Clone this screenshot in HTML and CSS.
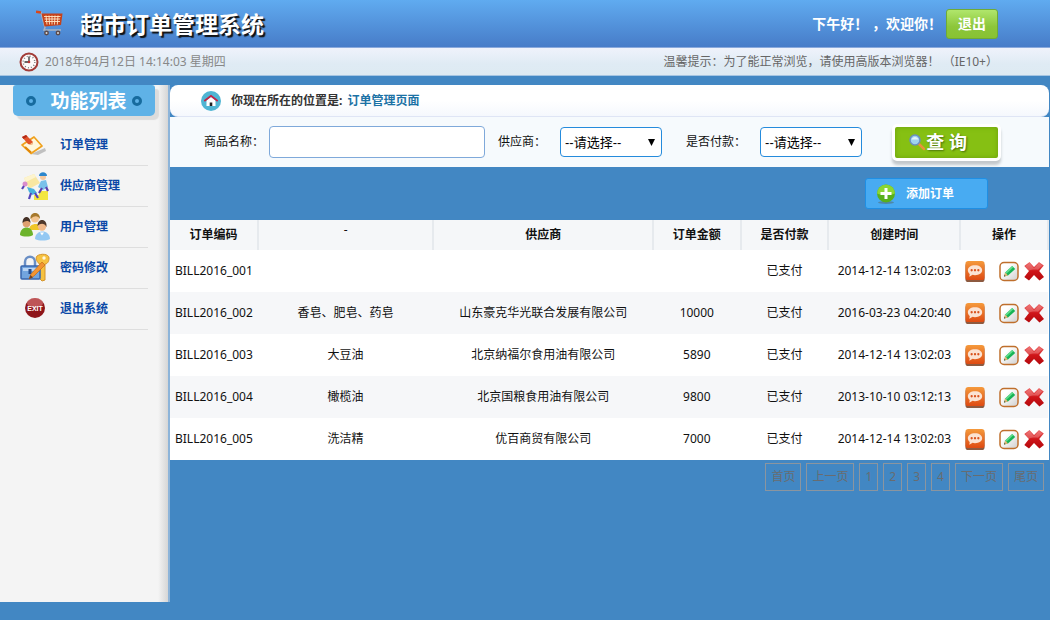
FILE: index.html
```
<!DOCTYPE html>
<html lang="zh-CN">
<head>
    <meta charset="UTF-8">
    <title>超市订单管理系统</title>
    <link rel="stylesheet" href="styles.css">
</head>
<body>
    <!-- shared icons -->
    <svg class="sprite" width="0" height="0" aria-hidden="true">
        <defs>
            <linearGradient id="gOrange" x1="0" y1="0" x2="0" y2="1"><stop offset="0" stop-color="#f59a3c"/><stop offset="1" stop-color="#de4a12"/></linearGradient>
            <linearGradient id="gRed" x1="0" y1="0" x2="0" y2="1"><stop offset="0" stop-color="#ee6a6a"/><stop offset=".5" stop-color="#cf1519"/><stop offset="1" stop-color="#b3090d"/></linearGradient>
            <linearGradient id="gPaper" x1="0" y1="0" x2="1" y2="1"><stop offset=".3" stop-color="#ffffff"/><stop offset="1" stop-color="#cfcfcf"/></linearGradient>
        </defs>
        <symbol id="view" viewBox="0 0 20 22">
            <rect x="0" y="2" width="20" height="20" rx="3" fill="#8d5a40"/>
            <rect x="0" y="0" width="20" height="20" rx="3" fill="url(#gOrange)"/>
            <path d="M10 4.500c-4.500 0-7.500 2.200-7.500 5.200 0 1.600.8 2.900 2 3.800L4 16.500l3.500-2c.8.2 1.600.3 2.500.3 4.500 0 7.500-2.100 7.500-5.100S14.500 4.500 10 4.500z" fill="#fbe3d3"/>
            <circle cx="6.500" cy="9.700" r="1.200" fill="#d9531e"/><circle cx="10" cy="9.700" r="1.200" fill="#d9531e"/><circle cx="13.500" cy="9.700" r="1.200" fill="#d9531e"/>
        </symbol>
        <symbol id="edit" viewBox="0 0 20 20">
            <rect x="1" y="1" width="18" height="18" rx="4" fill="url(#gPaper)" stroke="#bf6f2c" stroke-width="1.500"/>
            <path d="M5 15l1.200-4 7-6.500 3 3-7.200 6.500z" fill="#17b455"/>
            <path d="M6.200 11l7-6.500 1.200 1.200-7 6.600z" fill="#5fdc8c"/>
            <path d="M5 15l1.200-4 2.800 3z" fill="#e9b878"/><path d="M5 15l.5-1.600 1.100 1.100z" fill="#333"/>
        </symbol>
        <symbol id="remove" viewBox="0 0 20 20">
            <path d="M5.500 0.500L10 5.500 15 .5l4.800 3.500-4.600 5.500 4.800 6-4.500 3.500L10 13.500 5 19 .3 15.500l4.700-6L.3 4.500z" fill="url(#gRed)"/>
            <path d="M5.500 1.500L10 6.800l5-5 3.200 2.300L14 8.200c-3-.4-7-.2-9.500 1L1.500 4.700z" fill="#f28d8d" opacity=".45"/>
        </symbol>
    </svg>

    <header class="header">
        <div class="brand">
            <svg class="cart" viewBox="0 0 28 27" aria-hidden="true">
                <path d="M1 2l4 .5L9 17.500l-1 2.500h17" fill="none" stroke="#a9b4c4" stroke-width="1.500"/>
                <path d="M0 1.800L5 2.500" stroke="#d8471c" stroke-width="2.500"/>
                <path d="M5.500 3.500h21l-1.500 11.500L8.500 16.500z" fill="#c5431b"/>
                <path d="M8 6.500h16.500M8.500 9h15.500M9 11.500h15M10 5.500l1 9M13 5.500l.5 9M16 5.500v9M19 5.500l-.5 9M22 5.500l-.7 9" stroke="#ffe7c5" stroke-width=".9"/>
                <circle cx="10.500" cy="23" r="2.400" fill="#5b4a4a"/><circle cx="22" cy="23" r="2.400" fill="#5b4a4a"/>
                <circle cx="10.500" cy="23" r="1" fill="#ddd"/><circle cx="22" cy="23" r="1" fill="#ddd"/>
            </svg>
            <h1>超市订单管理系统</h1>
        </div>
        <div class="user">
            <span>下午好！ ，欢迎你！</span>
            <a href="#" class="logout">退出</a>
        </div>
    </header>

    <section class="timebar">
        <svg class="clock" viewBox="0 0 20 20" aria-hidden="true">
            <circle cx="10" cy="10" r="8.500" fill="#fdfafa" stroke="#a23c38" stroke-width="2"/>
            <circle cx="10" cy="10" r="5.800" fill="none" stroke="#777" stroke-width="1.500" stroke-dasharray=".9 2.137"/>
            <path d="M10 4.500V10H5.500" fill="none" stroke="#333" stroke-width="1.300"/>
            <circle cx="10" cy="10" r="1.300" fill="#b33"/>
        </svg>
        <span class="time">2018年04月12日 14:14:03 星期四</span>
        <span class="tip">温馨提示：为了能正常浏览，请使用高版本浏览器！ （IE10+）</span>
    </section>

    <div class="page">
        <nav class="sidebar">
            <h2><i class="dot"></i>功能列表<i class="dot"></i></h2>
            <ul>
                <li><a href="#">
                    <svg viewBox="0 0 30 30" aria-hidden="true">
                        <path d="M11 24l14-6 1 3-8 4z" fill="#aaa" opacity=".7"/>
                        <path d="M2 15l12-8 8 9-11 7.500z" fill="#fff7dc" stroke="#f0a11c" stroke-width="1.700" stroke-linejoin="round"/>
                        <path d="M5 17l6 5.500" stroke="#e08608" stroke-width="2"/>
                        <path d="M2 7l4-2 7 7-1 3-4-1z" fill="#e2542a"/><path d="M12 15l1-3-3.500 2.500z" fill="#f3cf9a"/><path d="M2 7l4-2 1.500 1.500L3.500 9z" fill="#b32b18"/>
                    </svg>订单管理</a></li>
                <li><a href="#">
                    <svg viewBox="0 0 30 30" aria-hidden="true">
                        <path d="M14 29v-5h5v-4h9v9z" fill="#f4e640"/>
                        <path d="M4 7l10-4 6 9-11 6z" fill="#f8e7a2"/><path d="M4 7l10-4 2 3L6 11z" fill="#fdf4ce"/>
                        <path d="M21 10l5-1 2 7-5 3-5-3 1-2z" fill="#79c1ea"/><circle cx="23" cy="6" r="3" fill="#f5c9a0"/><path d="M19 5c0-5 8-5 8 0z" fill="#2c86cc"/>
                        <path d="M22 17l-3 5M26 16l2 4" stroke="#5c3fae" stroke-width="2.200"/>
                        <circle cx="5" cy="13" r="2.500" fill="#d98ccd"/><path d="M7 16l7 2 3 4-5 2-3-3z" fill="#49b2de"/><path d="M11 22l-2 6M15 22l3 5M4 15l-2 3" stroke="#5745b9" stroke-width="2.200"/>
                    </svg>供应商管理</a></li>
                <li><a href="#">
                    <svg viewBox="0 0 30 30" aria-hidden="true">
                        <path d="M9 18c0-8 13-8 13 0z" fill="#f0c626"/><circle cx="15" cy="6.500" r="4" fill="#f3c590"/><path d="M10.500 7c-1-8 10-8 9.500 0-2-3-5-4-9.500 0z" fill="#a6792c"/>
                        <path d="M0 23c0-10 13-10 13 0-3 2-10 2-13 0z" fill="#6cb32b"/><circle cx="6.500" cy="11.500" r="3.800" fill="#dfa070"/><path d="M2.500 11c0-8 8-8 8 0-2-3-6-2-8 0z" fill="#453126"/>
                        <path d="M15 27c0-10 15-10 15 0-4 2-11 2-15 0z" fill="#93c8f3"/><circle cx="22" cy="14.500" r="4.200" fill="#f0b98b"/><path d="M17.500 14c0-8 10-8 9 1-2-4-6-4-9-1z" fill="#4f382b"/>
                        <path d="M20 20.500l2 3 2-3z" fill="#fff"/>
                    </svg>用户管理</a></li>
                <li><a href="#">
                    <svg viewBox="0 0 30 30" aria-hidden="true">
                        <path d="M5 13V9c0-7 10-7 10 0v4" fill="none" stroke="#6a8fc5" stroke-width="2.500"/>
                        <path d="M17 3c4-3 12-2 12 2 0 4-2 6-4 6v16l-3 1-3-3 1-3-1-3 1-3v-5c-3-1-5-6-3-8z" fill="#f6c240" stroke="#d5942b"/>
                        <circle cx="24" cy="5" r="1.700" fill="#fff8df"/>
                        <rect x="1" y="13" width="19" height="13" rx="1" fill="#72a5df" stroke="#3866ad" stroke-width="1.500"/>
                        <rect x="3" y="15" width="15" height="3" fill="#b9d4f3"/><path d="M10 16v5" stroke="#234b8c" stroke-width="3"/>
                        <path d="M9 26l2-5L22 9l3 3-11 11z" fill="#f29432" stroke="#c46d18" stroke-width=".7"/><path d="M9 26l1.500-4 2.500 2.500z" fill="#71452a"/>
                    </svg>密码修改</a></li>
                <li><a href="#">
                    <svg viewBox="0 0 30 30" aria-hidden="true">
                        <circle cx="15" cy="14" r="10" fill="#8e1519"/><ellipse cx="15" cy="9" rx="8" ry="5" fill="#e58b8b" opacity=".55"/>
                        <text x="15" y="17" class="exit-text">EXIT</text>
                    </svg>退出系统</a></li>
            </ul>
        </nav>

        <main class="main">
            <div class="location">
                <svg viewBox="0 0 20 20" aria-hidden="true">
                    <circle cx="10" cy="10" r="10" fill="#50b5d3"/>
                    <path d="M5.500 9.500L10 6l4.500 3.500V15h-9z" fill="#fff"/><path d="M3.300 10L10 4.800l6.700 5.200" fill="none" stroke="#c62143" stroke-width="1.700"/><path d="M8.700 15v-3.500h2.600V15z" fill="#222"/>
                </svg>
                <strong>你现在所在的位置是:</strong>
                <span>订单管理页面</span>
            </div>

            <form class="search" onsubmit="return false">
                <label for="name">商品名称：</label>
                <input type="text" id="name">
                <label for="provider">供应商：</label>
                <select id="provider"><option>--请选择--</option></select>
                <label for="pay">是否付款：</label>
                <select id="pay"><option>--请选择--</option></select>
                <button type="submit">
                    <svg viewBox="0 0 18 18" aria-hidden="true">
                        <path d="M10 10l6 6" stroke="#e8913c" stroke-width="2.500" stroke-linecap="round"/>
                        <circle cx="7" cy="7" r="5" fill="#9fd3ee" stroke="#6a8ec0" stroke-width="1.500"/><path d="M3.500 6.500c1-3.500 6-3.500 7 0z" fill="#e4f4fb"/>
                    </svg>查 询</button>
            </form>

            <div class="toolbar">
                <a href="#" class="add">
                    <svg viewBox="0 0 20 20" aria-hidden="true">
                        <ellipse cx="10" cy="18.500" rx="8" ry="1.500" fill="#4f87a8"/>
                        <circle cx="10" cy="9.500" r="9" fill="#58b01c"/><path d="M1 9.500a9 9 0 0 1 18 0c-5 2-13 2-18 0z" fill="#8bd634"/>
                        <path d="M10 4v11M4.500 9.500h11" stroke="#fff" stroke-width="3"/>
                    </svg>添加订单</a>
            </div>

            <table class="orders">
                <colgroup>
                    <col class="c-code"><col class="c-name"><col class="c-provider"><col class="c-money"><col class="c-pay"><col class="c-date"><col class="c-action">
                </colgroup>
                <thead>
                    <tr><th>订单编码</th><th class="blank">-</th><th>供应商</th><th>订单金额</th><th>是否付款</th><th>创建时间</th><th>操作</th></tr>
                </thead>
                <tbody>
                    <tr>
                        <td>BILL2016_001</td><td></td><td></td><td></td><td>已支付</td><td>2014-12-14 13:02:03</td>
                        <td><div class="actions"><a href="#" title="查看"><svg><use href="#view"/></svg></a><a href="#" title="修改"><svg><use href="#edit"/></svg></a><a href="#" title="删除"><svg><use href="#remove"/></svg></a></div></td>
                    </tr>
                    <tr>
                        <td>BILL2016_002</td><td>香皂、肥皂、药皂</td><td>山东豪克华光联合发展有限公司</td><td>10000</td><td>已支付</td><td>2016-03-23 04:20:40</td>
                        <td><div class="actions"><a href="#" title="查看"><svg><use href="#view"/></svg></a><a href="#" title="修改"><svg><use href="#edit"/></svg></a><a href="#" title="删除"><svg><use href="#remove"/></svg></a></div></td>
                    </tr>
                    <tr>
                        <td>BILL2016_003</td><td>大豆油</td><td>北京纳福尔食用油有限公司</td><td>5890</td><td>已支付</td><td>2014-12-14 13:02:03</td>
                        <td><div class="actions"><a href="#" title="查看"><svg><use href="#view"/></svg></a><a href="#" title="修改"><svg><use href="#edit"/></svg></a><a href="#" title="删除"><svg><use href="#remove"/></svg></a></div></td>
                    </tr>
                    <tr>
                        <td>BILL2016_004</td><td>橄榄油</td><td>北京国粮食用油有限公司</td><td>9800</td><td>已支付</td><td>2013-10-10 03:12:13</td>
                        <td><div class="actions"><a href="#" title="查看"><svg><use href="#view"/></svg></a><a href="#" title="修改"><svg><use href="#edit"/></svg></a><a href="#" title="删除"><svg><use href="#remove"/></svg></a></div></td>
                    </tr>
                    <tr>
                        <td>BILL2016_005</td><td>洗洁精</td><td>优百商贸有限公司</td><td>7000</td><td>已支付</td><td>2014-12-14 13:02:03</td>
                        <td><div class="actions"><a href="#" title="查看"><svg><use href="#view"/></svg></a><a href="#" title="修改"><svg><use href="#edit"/></svg></a><a href="#" title="删除"><svg><use href="#remove"/></svg></a></div></td>
                    </tr>
                </tbody>
            </table>

            <div class="pager">
                <a href="#">首页</a>
                <a href="#">上一页</a>
                <a href="#">1</a>
                <a href="#">2</a>
                <a href="#">3</a>
                <a href="#">4</a>
                <a href="#">下一页</a>
                <a href="#">尾页</a>
            </div>
        </main>
    </div>
</body>
</html>
```
FILE: styles.css
```
* { margin: 0; padding: 0; box-sizing: border-box; }
body { min-height: 100vh; display: flex; flex-direction: column; background: #4287c3; color: #111; font: 12px/18px "Noto Sans", "Noto Sans CJK SC", sans-serif; }
a { text-decoration: none; }
ul { list-style: none; }
svg { display: block; flex: none; }
.sprite { position: absolute; }

/* header */
.header { display: flex; justify-content: space-between; align-items: center; height: 48px; padding: 0 52px 0 36px; background: linear-gradient(#60abf0, #477cc8); border-bottom: 1px solid #8aa9dc; }
.brand { display: flex; align-items: center; gap: 16px; }
.cart { width: 28px; height: 27px; }
.brand h1 { font-size: 23px; line-height: 32px; color: #fff; text-shadow: 2px 2px 1px #111; }
.user { display: flex; align-items: center; color: #fff; font-size: 14px; font-weight: bold; }
.logout { margin-left: 4px; width: 52px; line-height: 28px; text-align: center; color: #fff; background: linear-gradient(#b0e66c, #8cc63a 60%, #88c232); border: 1px solid #6fab35; border-radius: 3px; }

.timebar { display: flex; align-items: center; height: 28px; padding: 0 52px 0 19px; color: #888; background: linear-gradient(#eff2fb, #dfebf4 60%, #deeaf2); border-bottom: 1px solid #a5c5e2; }
.clock { width: 20px; height: 20px; margin-right: 6px; }
.tip { margin-left: auto; color: #666; }

.page { flex: 1; display: flex; margin: 9px 1px 18px 0; }

/* left menu */
.sidebar { flex: none; width: 170px; padding: 0 13px; background: linear-gradient(to right, #f4f4f4 158px, #d6d6d6 168px); border-right: 2px solid #8db4d9; }
.sidebar h2 { display: flex; align-items: center; justify-content: center; gap: 5px; height: 31px; margin-bottom: 9px; font-size: 19px; color: #fff; background: #5fb2e7; border-radius: 3px 3px 5px 5px; box-shadow: 4px 4px 1px #dcdcdc; }
.dot { width: 10px; height: 10px; border: 3px solid #176b9e; border-radius: 50%; }
.dot:first-child { margin-right: 9px; }
.sidebar li { margin: 0 7px; border-bottom: 1px solid #dedede; }
.sidebar li a { display: flex; align-items: center; gap: 10px; height: 40px; color: #0a48a6; font-weight: bold; }
.sidebar li svg { width: 30px; height: 30px; }
.exit-text { font: bold 7px "Liberation Sans", sans-serif; fill: #fff; text-anchor: middle; }

/* content */
.main { flex: 1; min-width: 0; }
.location { display: flex; align-items: center; height: 32px; padding-left: 31px; background: linear-gradient(#fff, #fff 50%, #f5f8fd); border-bottom: 1px solid #dfe5f5; border-radius: 8px; color: #333; }
.location svg { width: 20px; height: 20px; margin-right: 10px; }
.location span { margin-left: 5px; color: #1b72a5; font-weight: bold; }

.search { display: flex; align-items: center; height: 50px; padding-left: 34px; background: #f6fafd; }
.search label { flex: none; }
.search input { width: 216px; height: 32px; margin: 0 13px 0 5px; padding: 0 6px; border: 1px solid #7fa9da; border-radius: 4px; background: #fff; }
.search select { width: 102px; height: 30px; margin: 0 24px 0 14px; padding: 0 4px; appearance: none; border: 1px solid #258bdc; border-radius: 4px; background: #fff url("data:image/svg+xml,%3Csvg xmlns='http://www.w3.org/2000/svg' width='7' height='7'%3E%3Cpath d='M0 0h7L3.500 7z'/%3E%3C/svg%3E") no-repeat right 6px center; color: #000; font: 13px "Liberation Sans", "Noto Sans CJK SC", sans-serif; }
#pay { margin-left: 14px; margin-right: 30px; }
.search button { display: flex; align-items: center; justify-content: center; width: 109px; height: 37px; padding-right: 18px; border: 3px solid #fff; border-radius: 5px; background: #86c013; box-shadow: 0 4px 3px #c3c8cc, inset 0 0 5px #6ba00c; color: #fff; font: bold 18px/28px "Noto Sans", "Noto Sans CJK SC", sans-serif; text-shadow: 1px 1px 2px #486f0a; }
.search button svg { width: 18px; height: 18px; }

.toolbar { display: flex; justify-content: flex-end; height: 53px; padding: 11px 61px 11px 0; }
.add { display: flex; align-items: center; gap: 10px; width: 123px; padding-left: 10px; border: 1px solid #1f8fe4; border-radius: 3px; background: #48abf2; color: #fff; font-weight: bold; }
.add svg { width: 20px; height: 20px; }

.orders { width: 100%; table-layout: fixed; border-collapse: collapse; background: #fff; text-align: center; }
.c-code { width: 10%; }
.c-name { width: 20%; }
.c-provider { width: 25%; }
.c-money { width: 10%; }
.c-pay { width: 10%; }
.c-date { width: 15%; }
.c-action { width: 10%; }
.orders th { height: 30px; background: #f5f7f9; border-right: 2px solid #e6eaee; }
.orders th.blank { padding-bottom: 10px; font-weight: normal; }
.orders td { height: 42px; white-space: nowrap; }
.orders tbody tr:nth-child(even) { background: #f6f7f9; }
.actions { display: flex; align-items: center; justify-content: flex-end; padding-right: 4px; }
.actions svg { width: 20px; height: 21px; }
.actions a:nth-child(2) { margin: 0 5px 0 14px; }

.pager { display: flex; justify-content: flex-end; gap: 5px; padding: 3px 5px 0 0; }
.pager a { padding: 4px 5px; border: 1px solid #8b959f; color: #686c70; }
```
